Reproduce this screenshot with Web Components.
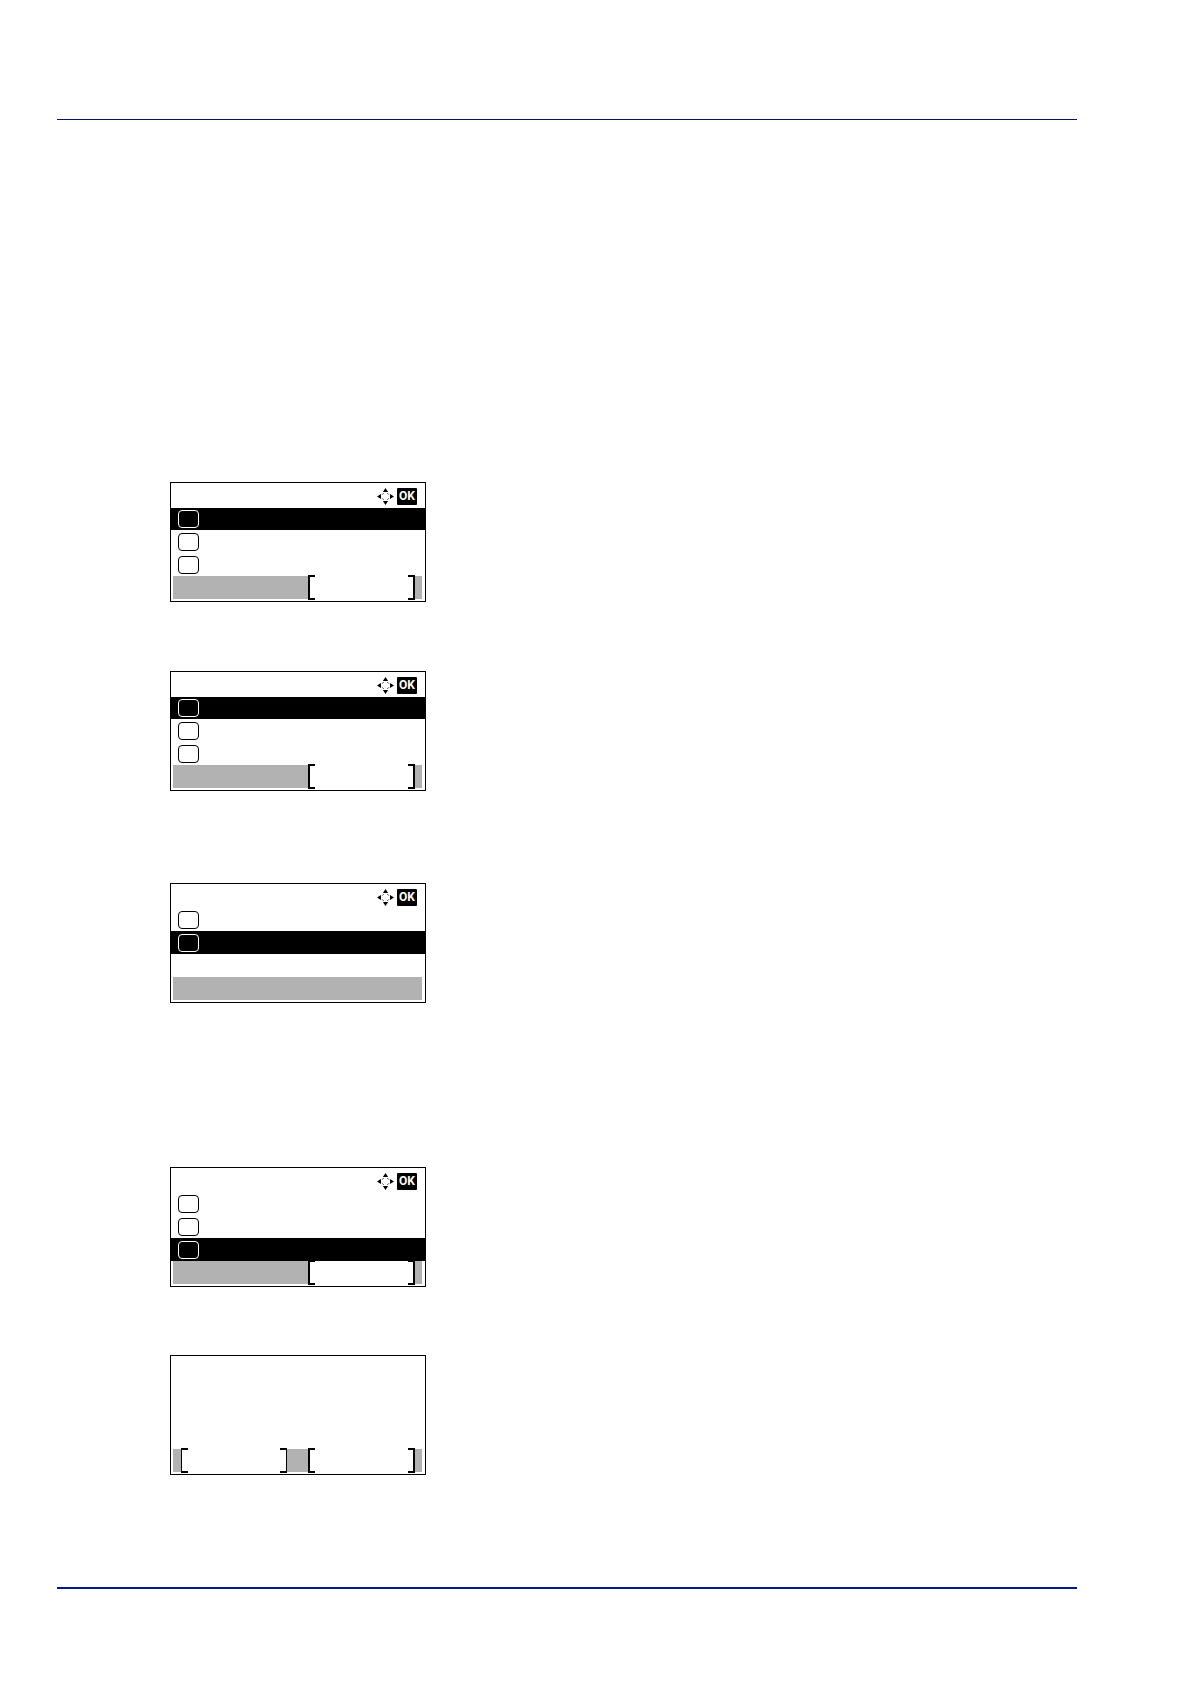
<!DOCTYPE html>
<html lang="en">
<head>
<meta charset="utf-8">
<meta name="viewport" content="width=device-width, initial-scale=1">
<title>Message display</title>
<style>
    body {
        margin: 0;
        background: #fff;
        font-family: "Liberation Sans", Arial, sans-serif;
    }
</style>
</head>
<body>
<manual-page>
    <lcd-screen rows="3" selected="1" keys="right"></lcd-screen>
    <lcd-screen class="near" rows="3" selected="1" keys="right"></lcd-screen>
    <lcd-screen class="mid" rows="2" selected="2" keys="none"></lcd-screen>
    <lcd-screen class="far" rows="3" selected="3" keys="right"></lcd-screen>
    <lcd-screen class="last" rows="0" keys="both"></lcd-screen>
</manual-page>

<script>
class ManualPage extends HTMLElement {
    constructor() {
        super();
        this.attachShadow({mode: "open"});
        this.shadowRoot.innerHTML = `
        <style>
            :host {
                display: flex;
                flex-direction: column;
                box-sizing: border-box;
                min-height: 100vh;
                padding: 119px 113px 95px 57px;
            }
            header {
                border-top: 1px solid #001a66;
            }
            main {
                flex: 1;
                display: flex;
                flex-direction: column;
                align-items: flex-start;
                padding: 362px 0 112px 113px;
            }
            footer {
                border-top: 2px solid #001a8c;
            }
            ::slotted(.near) { margin-top: 69px; }
            ::slotted(.mid) { margin-top: 92px; }
            ::slotted(.far) { margin-top: 164px; }
            ::slotted(.last) { margin-top: 68px; }
        </style>
        <header></header>
        <main><slot></slot></main>
        <footer></footer>
        `;
    }
}

class NavKeys extends HTMLElement {
    constructor() {
        super();
        this.attachShadow({mode: "open"});
        this.shadowRoot.innerHTML = `
        <style>
            :host {
                display: flex;
                align-items: center;
                gap: 3px;
            }
            svg {
                display: block;
                width: 17px;
                height: 17px;
            }
            button {
                display: flex;
                align-items: center;
                justify-content: center;
                width: 20px;
                height: 17px;
                padding: 0;
                border: 0;
                border-radius: 1px;
                background: #000;
                color: #fff;
                font: bold 12px/17px Roboto, "Liberation Sans", sans-serif;
            }
        </style>
        <svg viewBox="0 0 17 17" aria-hidden="true">
            <path d="M8.5 0 11.1 4H5.9ZM8.5 17 5.9 13h5.2ZM0 8.5 4 5.9v5.2ZM17 8.5 13 11.1V5.9Z"/>
            <path d="M5.2 6.6 6.6 5.2M10.4 5.2l1.4 1.4M11.8 10.4l-1.4 1.4M6.6 11.8 5.2 10.4" fill="none" stroke="#333"/>
        </svg>
        <button type="button">OK</button>
        `;
    }
}

class MenuRow extends HTMLElement {
    constructor() {
        super();
        this.attachShadow({mode: "open"});
        this.shadowRoot.innerHTML = `
        <style>
            :host {
                display: flex;
                align-items: center;
                padding: 0 7px;
                color: #000;
                background: #fff;
            }
            :host([selected]) {
                color: #fff;
                background: #000;
            }
            input {
                appearance: none;
                box-sizing: border-box;
                width: 21px;
                height: 18px;
                margin: 0;
                border: 1px solid currentColor;
                border-radius: 4px;
                color: inherit;
            }
        </style>
        <input type="checkbox" aria-label="Menu item">
        `;
    }
}

class SoftKey extends HTMLElement {
    constructor() {
        super();
        this.attachShadow({mode: "open"});
        this.shadowRoot.innerHTML = `
        <style>
            :host {
                display: flex;
                margin: -1px 0;
            }
            button {
                flex: 1;
                display: flex;
                justify-content: space-between;
                align-items: stretch;
                padding: 0;
                border: 0;
                background: linear-gradient(#fff, #fff) no-repeat 0 1px;
            }
            button::before,
            button::after {
                content: "";
                box-sizing: border-box;
                width: 7px;
                border: 2px solid #000;
            }
            button::before { border-right: 0; }
            button::after { border-left: 0; }
            :host([thin]) button::before { border-left-width: 1px; }
            :host([thin]) button::after { border-right-width: 1px; }
        </style>
        <button type="button" aria-label="Soft key"></button>
        `;
    }
}

class LcdScreen extends HTMLElement {
    constructor() {
        super();
        this.attachShadow({mode: "open"});
        this.render();
    }

    getRows() {
        const count = Number(this.getAttribute("rows"));
        const selected = Number(this.getAttribute("selected"));
        let html = "";
        for (let i = 1; i <= count; i++) {
            html += `<menu-row ${i === selected ? "selected" : ""}></menu-row>`;
        }
        return html;
    }

    getKeys() {
        const keys = this.getAttribute("keys");
        const left = keys === "both" ? `<soft-key class="left" thin></soft-key>` : "";
        const right = keys !== "none" ? `<soft-key class="right"></soft-key>` : "";
        return left + right;
    }

    render() {
        const hasMenu = Number(this.getAttribute("rows")) > 0;
        this.shadowRoot.innerHTML = `
        <style>
            :host {
                display: block;
                box-sizing: border-box;
                width: 256px;
                border: 1px solid #000;
                background: #fff;
            }
            .screen {
                display: grid;
                grid-template-rows: 25px 22px 23px 23px 23px;
                padding-bottom: 2px;
            }
            .title {
                display: flex;
                align-items: center;
                justify-content: flex-end;
                padding: 2px 8px 0 0;
            }
            .bar {
                grid-row: 5;
                display: grid;
                grid-template-columns: 106px 1fr;
                column-gap: 21px;
                margin: 0 3px 0 2px;
                padding: 0 7px 0 8px;
                background: #b2b2b2;
            }
            .left { grid-column: 1; }
            .right { grid-column: 2; }
        </style>
        <div class="screen">
            <div class="title">${hasMenu ? "<nav-keys></nav-keys>" : ""}</div>
            ${this.getRows()}
            <div class="bar">${this.getKeys()}</div>
        </div>
        `;
    }
}

customElements.define("nav-keys", NavKeys);
customElements.define("menu-row", MenuRow);
customElements.define("soft-key", SoftKey);
customElements.define("lcd-screen", LcdScreen);
customElements.define("manual-page", ManualPage);
</script>
</body>
</html>
